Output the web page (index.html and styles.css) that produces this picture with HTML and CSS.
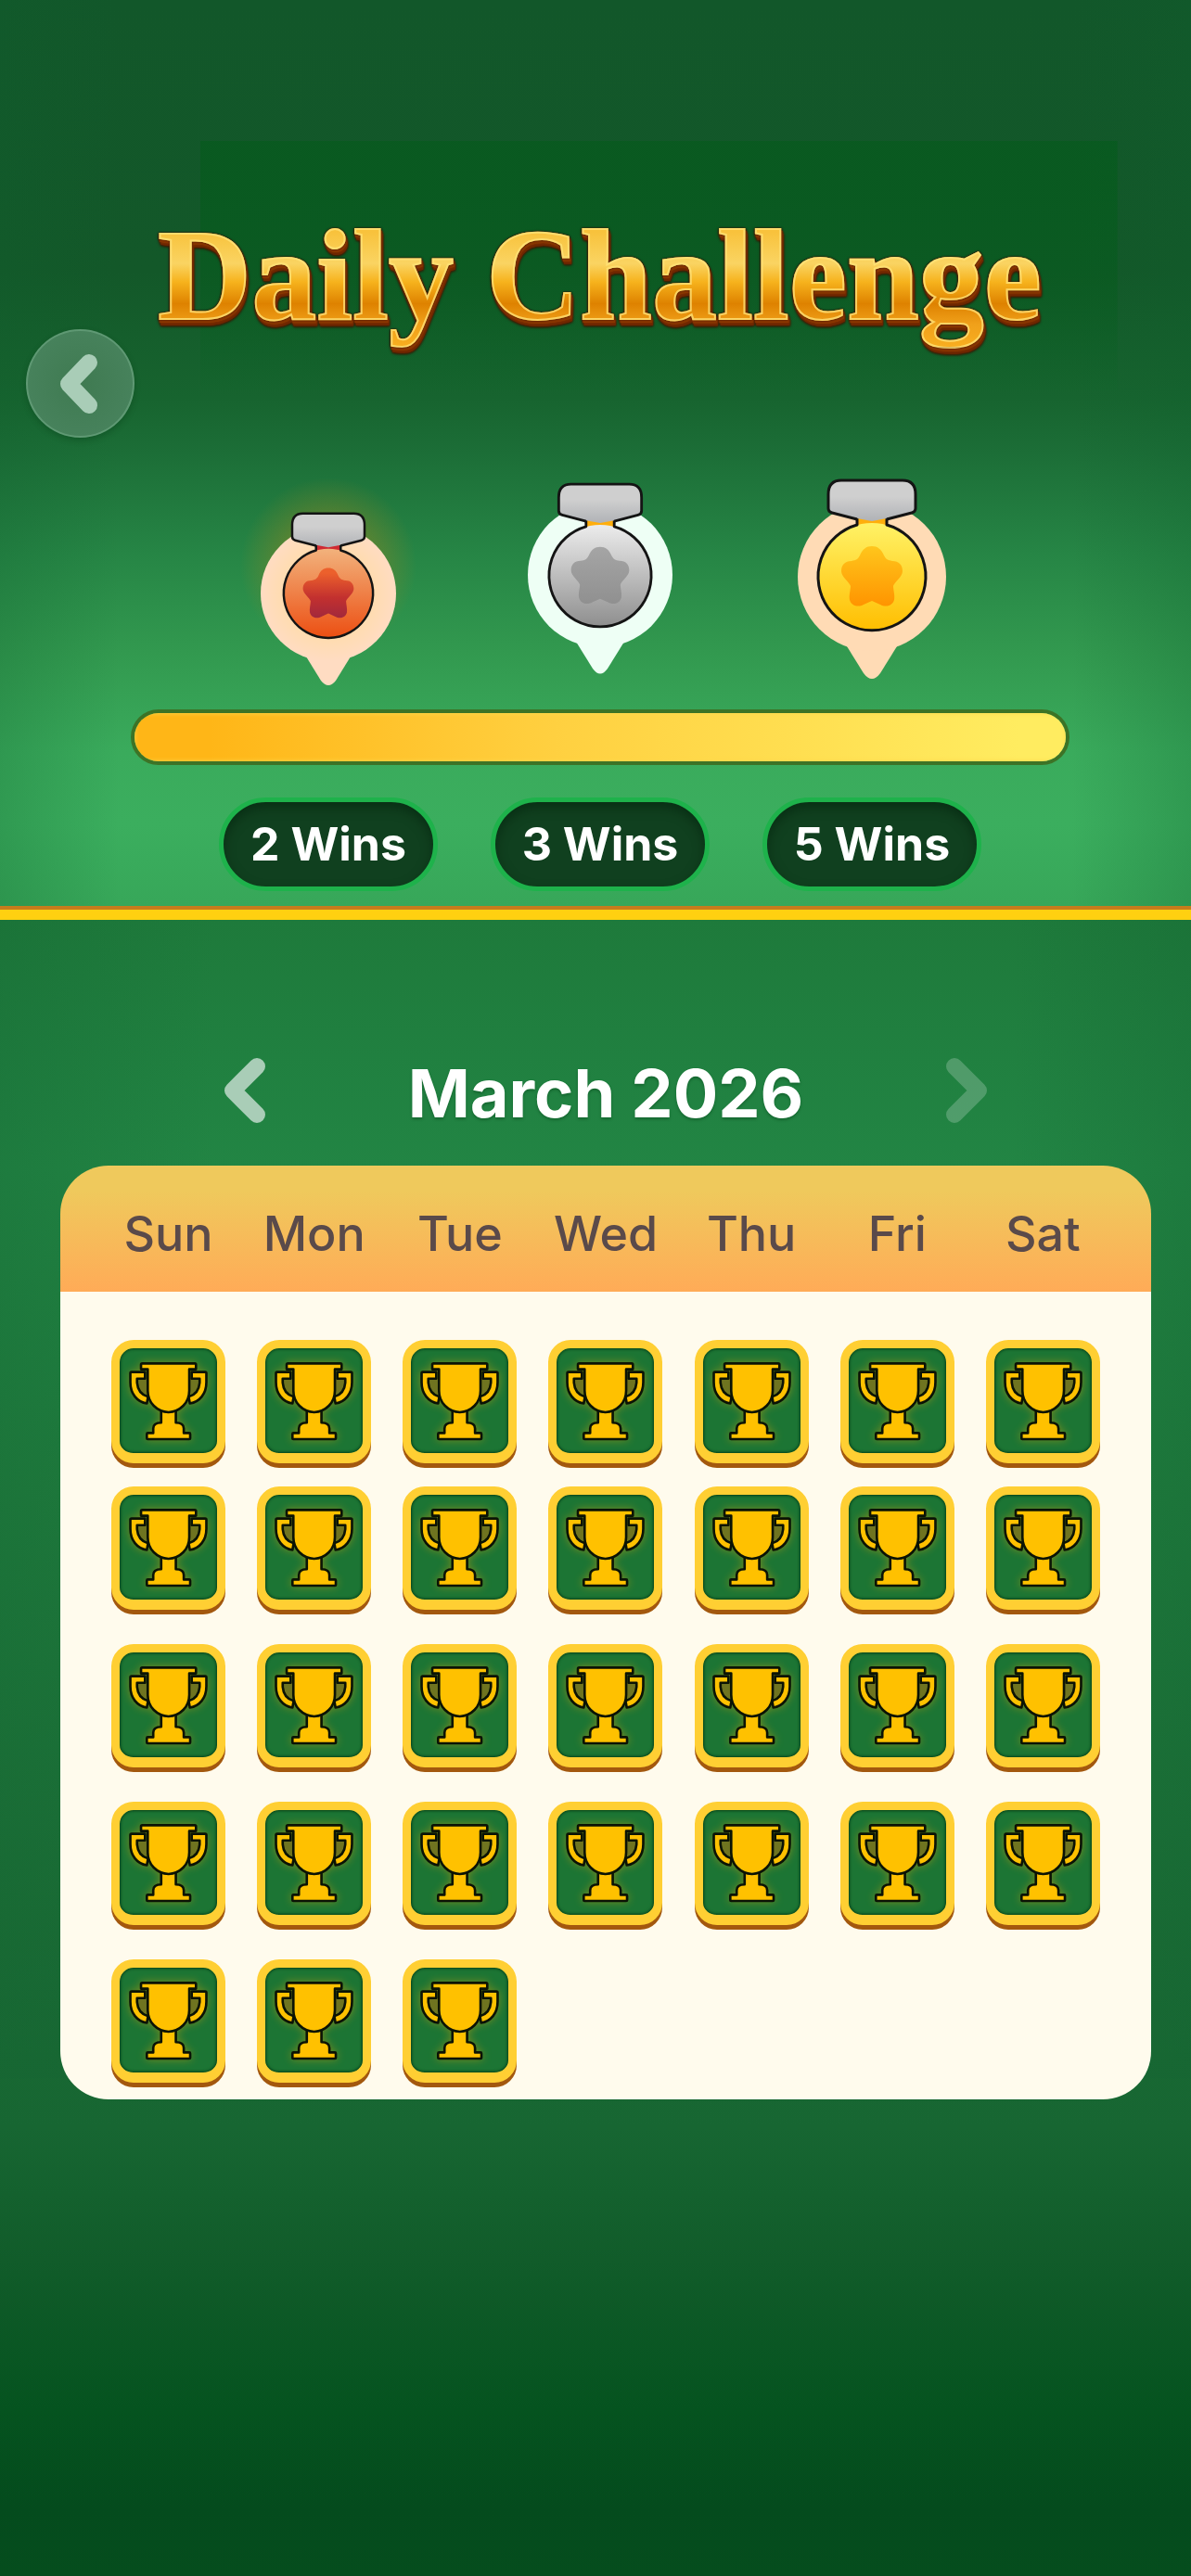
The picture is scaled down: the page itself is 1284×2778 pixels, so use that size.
FILE: index.html
```html
<!DOCTYPE html>
<html lang="en">
  <head>
    <meta charset="UTF-8" />
    <meta name="viewport" content="width=device-width, initial-scale=1.0" />
    <title>Daily Challenge</title>
    <link rel="stylesheet" href="styles.css">
  </head>
  <body>
    <!-- shared shapes -->
    <svg class="defs" width="0" height="0" aria-hidden="true">
      <defs>
        <linearGradient id="steel" x1="0" y1="0" x2="0" y2="1">
          <stop offset="0.4" stop-color="#cfcfcf" />
          <stop offset="1" stop-color="#b0b2b6" />
        </linearGradient>
        <linearGradient id="bronze" x1="0" y1="0" x2="0" y2="1">
          <stop offset="0" stop-color="#f2b27c" />
          <stop offset="1" stop-color="#ec4e12" />
        </linearGradient>
        <linearGradient id="bronze_star" x1="0" y1="0" x2="0" y2="1">
          <stop offset="0.1" stop-color="#ec602c" />
          <stop offset="0.6" stop-color="#c2302f" />
          <stop offset="1" stop-color="#a2283c" />
        </linearGradient>
        <linearGradient id="silver" x1="0" y1="0" x2="0" y2="1">
          <stop offset="0" stop-color="#ececec" />
          <stop offset="1" stop-color="#8e8e8e" />
        </linearGradient>
        <linearGradient id="silver_star" x1="0" y1="0" x2="0" y2="1">
          <stop offset="0" stop-color="#a5a5a5" />
          <stop offset="1" stop-color="#909090" />
        </linearGradient>
        <linearGradient id="gold" x1="0" y1="0" x2="0" y2="1">
          <stop offset="0" stop-color="#fff266" />
          <stop offset="1" stop-color="#ffbe00" />
        </linearGradient>
        <linearGradient id="gold_star" x1="0" y1="0" x2="0" y2="1">
          <stop offset="0" stop-color="#ffc61c" />
          <stop offset="1" stop-color="#ff9400" />
        </linearGradient>
        <radialGradient id="peach">
          <stop offset="0.6" stop-color="#ffdcac" />
          <stop offset="1" stop-color="#ffdcc2" />
        </radialGradient>
        <radialGradient id="shine">
          <stop offset="0.3" stop-color="#a0861c" stop-opacity="0.6" />
          <stop offset="1" stop-color="#a0861c" stop-opacity="0" />
        </radialGradient>

        <path id="star" d="M0 -33 C6 -33 10 -30 13 -23 C15 -19 17 -18 22 -17 C29 -17 33 -13 33 -6 C33 0 24 6 23 10 C23 14 25 20 24 25 C22 32 14 33 9 30 L0 26 L-9 30 C-14 33 -22 32 -24 25 C-25 20 -23 14 -23 10 C-24 6 -33 0 -33 -6 C-33 -13 -29 -17 -22 -17 C-17 -18 -15 -19 -13 -23 C-10 -30 -6 -33 0 -33 Z" />
        <path id="clip" d="M-33 -106 H33 Q47 -106 47 -92 V-77 Q47 -73 43 -72 L16 -65 L0 -62 L-16 -65 L-43 -72 Q-47 -73 -47 -77 V-92 Q-47 -106 -33 -106 Z" />

        <symbol id="trophy" viewBox="87 101 319 340">
          <path d="M143 196 H178 V250 C157 248 145 230 143 196 Z M350 196 H315 V250 C336 248 348 230 350 196 Z" fill="#6f7420" />
          <g fill="#ffc100" stroke="#0b1305" stroke-width="8" stroke-linejoin="round">
            <path d="M122 181 Q122 177 126 177 H170 V199 H144 V212 C146 237 158 252 180 258 L176 280 C144 276 122 248 122 211 Z" />
            <path d="M371 181 Q371 177 367 177 H323 V199 H349 V212 C347 237 335 252 313 258 L317 280 C349 276 371 248 371 211 Z" />
            <path d="M223 300 H271 V343 C287 343 297 350 297 362 V377 H315 Q318 377 318 380 V395 Q318 397 315 397 H179 Q176 397 176 395 V380 Q176 377 179 377 H197 V362 C197 350 207 343 223 343 Z" />
            <path d="M161 149 H333 Q337 149 337 153 V168 H315 V238 C315 278 285 307 247 309 C209 307 179 278 179 238 V168 H157 V153 Q157 149 161 149 Z" />
          </g>
        </symbol>
      </defs>
    </svg>

    <section class="hero">
      <header class="top">
        <button class="back" type="button" aria-label="Back">
          <svg viewBox="0 0 50 66" width="50" height="66"><path d="M34 10 L12 33 L34 56" /></svg>
        </button>
        <h1 class="title"><span>Daily Challenge</span></h1>
      </header>

      <div class="goals">
        <div class="medals">
          <svg viewBox="0 0 236 240" width="236" height="240">
            <circle cx="118" cy="100" r="95" fill="url(#shine)" />
            <path d="M94 198 H142 L126 224 Q118 234 110 224 Z" fill="#ffdcc2" />
            <circle cx="118" cy="130" r="73" fill="url(#peach)" />
            <g transform="translate(118 130) scale(0.83)">
              <path d="M-16 -70 H16 V-50 H-16 Z" fill="#d02a32" />
              <circle r="58" fill="url(#bronze)" />
              <path class="outline" d="M-16 -66 V-56 A58 58 0 1 0 16 -56 V-66" />
              <use href="#clip" y="2" fill="url(#steel)" />
              <path class="outline" d="M-16 -62 L-43 -69 Q-47 -70 -47 -74 V-89 Q-47 -104 -33 -104 H33 Q47 -104 47 -89 V-74 Q47 -70 43 -69 L16 -62" />
              <use href="#star" fill="url(#bronze_star)" />
            </g>
          </svg>
          <svg viewBox="0 0 236 240" width="236" height="240">
            <path d="M92 182 H144 L126 211 Q118 222 110 211 Z" fill="#eefff5" />
            <circle cx="118" cy="110" r="78" fill="#eefff5" />
            <g transform="translate(118 111) scale(0.95)">
              <path d="M-16 -70 H16 V-50 H-16 Z" fill="#ffae0c" />
              <circle r="58" fill="url(#silver)" />
              <path class="outline" d="M-16 -66 V-56 A58 58 0 1 0 16 -56 V-66" />
              <use href="#clip" y="2" fill="url(#steel)" />
              <path class="outline" d="M-16 -62 L-43 -69 Q-47 -70 -47 -74 V-89 Q-47 -104 -33 -104 H33 Q47 -104 47 -89 V-74 Q47 -70 43 -69 L16 -62" />
              <use href="#star" fill="url(#silver_star)" />
            </g>
          </svg>
          <svg viewBox="0 0 236 240" width="236" height="240">
            <path d="M91 187 H145 L127 216 Q118 228 109 216 Z" fill="#ffdbb5" />
            <circle cx="118" cy="112" r="80" fill="#ffdbb5" />
            <g transform="translate(118 112)">
              <path d="M-16 -70 H16 V-50 H-16 Z" fill="#ffae0c" />
              <circle r="58" fill="url(#gold)" />
              <path class="outline" d="M-16 -66 V-56 A58 58 0 1 0 16 -56 V-66" />
              <use href="#clip" y="2" fill="url(#steel)" />
              <path class="outline" d="M-16 -62 L-43 -69 Q-47 -70 -47 -74 V-89 Q-47 -104 -33 -104 H33 Q47 -104 47 -89 V-74 Q47 -70 43 -69 L16 -62" />
              <use href="#star" fill="url(#gold_star)" />
            </g>
          </svg>
        </div>
        <progress class="bar" value="5" max="5" aria-label="Wins"></progress>
        <ul class="wins">
          <li>2 Wins</li>
          <li>3 Wins</li>
          <li>5 Wins</li>
        </ul>
      </div>
    </section>

    <main class="calendar">
      <div class="month">
        <button class="prev" type="button" aria-label="Previous month">
          <svg viewBox="0 0 45 70" width="45" height="70"><path d="M36 9 L10 35 L36 61" /></svg>
        </button>
        <h2>March 2026</h2>
        <button class="next" type="button" aria-label="Next month" disabled>
          <svg viewBox="0 0 45 70" width="45" height="70"><path d="M9 9 L35 35 L9 61" /></svg>
        </button>
      </div>

      <div class="panel">
        <table class="days">
          <thead>
            <tr>
              <th>Sun</th>
              <th>Mon</th>
              <th>Tue</th>
              <th>Wed</th>
              <th>Thu</th>
              <th>Fri</th>
              <th>Sat</th>
            </tr>
          </thead>
          <tbody id="day_list"></tbody>
        </table>
      </div>
    </main>

    <script>
      // March 2026 starts on a Sunday
      let total_days = 31;
      let rows = "";
      for (let start = 1; start <= total_days; start += 7) {
        rows += "<tr>";
        for (let day = start; day < start + 7; day++) {
          if (day > total_days) {
            rows += "<td></td>";
          } else {
            rows += `
              <td>
                <button class="day" type="button" aria-label="March ${day}">
                  <svg><use href="#trophy"></use></svg>
                </button>
              </td>
            `;
          }
        }
        rows += "</tr>";
      }
      document.getElementById("day_list").innerHTML = rows;
    </script>
  </body>
</html>
```
FILE: styles.css
```css
* {
  box-sizing: border-box;
}
body {
  margin: 0;
  min-height: 100vh;
  font-family: Inter, "Liberation Sans", sans-serif;
  background-color: #054a1e;
}
.defs {
  position: absolute;
}
h1,
h2,
ul {
  margin: 0;
  padding: 0;
}
button {
  padding: 0;
  border: 0;
  background: none;
  cursor: pointer;
}
svg {
  display: block;
}

/* hero */
.hero {
  padding-bottom: 16px;
  background:
    linear-gradient(rgba(0, 92, 24, 0.5), rgba(0, 92, 24, 0.4) 40%, rgba(10, 108, 40, 0.1)) 73% 216px / 77% 205px no-repeat,
    linear-gradient(rgba(0, 92, 24, 0.5), rgba(0, 92, 24, 0.5)) 73% 152px / 77% 64px no-repeat,
    linear-gradient(90deg, rgba(15, 95, 45, 0.25), transparent 10%, transparent 90%, rgba(15, 95, 45, 0.25)),
    linear-gradient(#12572a, #135829 30%, #17642f 44%, #1c6e37 50%, #268545 61%, #32994f 72%, #3aab5c 83%, #3bae5e 91%, #37a759);
  border-bottom: 4px solid #c67c1c;
}
.top {
  display: flex;
  align-items: flex-end;
  padding: 217px 136px 0 28px;
}
.back {
  flex: none;
  display: flex;
  align-items: center;
  justify-content: center;
  width: 117px;
  height: 117px;
  border: 2px solid rgba(120, 175, 140, 0.5);
  border-radius: 50%;
  background: radial-gradient(#3f7a51, #4a8560);
  box-shadow: 0 3px 6px rgba(0, 50, 15, 0.3);
}
.back svg,
.month svg {
  fill: none;
  stroke: #a9cdb7;
  stroke-width: 18px;
  stroke-linecap: round;
  stroke-linejoin: round;
}
.title {
  flex-grow: 1;
  margin-bottom: 95px;
  font: bold 140px/160px "Liberation Serif", serif;
  text-align: center;
  white-space: nowrap;
  filter: drop-shadow(0 0 1px #3c1200) drop-shadow(1px 3px 0 #8a3600) drop-shadow(1px 3px 0 #6e2600) drop-shadow(0 1px 1px #2c1000);
}
.title span {
  color: transparent;
  background: linear-gradient(#f8c23c 20%, #fad462 42%, #f6b21c 55%, #de8200 70%, #f0a01a 84%, #f8ae20);
  background-clip: text;
  -webkit-background-clip: text;
  -webkit-text-stroke: 2px rgba(255, 226, 120, 0.8);
}

.goals {
  padding: 38px 131px 0 141px;
}
.medals,
.wins {
  display: grid;
  grid-template-columns: repeat(3, 236px);
  justify-content: center;
  gap: 57px;
}
.outline {
  fill: none;
  stroke: #141414;
  stroke-width: 3px;
  stroke-linejoin: round;
}
.bar {
  appearance: none;
  display: block;
  width: 100%;
  height: 60px;
  margin: 15px 0 35px;
  border: 4px solid #3d7326;
  border-radius: 30px;
  overflow: hidden;
}
.bar::-webkit-progress-bar {
  background: #10401f;
}
.bar::-webkit-progress-value {
  background: linear-gradient(90deg, #ffb617 8%, #ffd040 45%, #ffec60 95%);
  box-shadow: inset 0 0 5px #ffd84e;
}
.wins {
  list-style: none;
}
.wins li {
  border: 5px solid #1eb24b;
  border-radius: 51px;
  background-color: #10401f;
  box-shadow: inset 0 6px 12px rgba(0, 30, 10, 0.5);
  color: #fff;
  font-size: 50px;
  font-weight: 700;
  line-height: 91px;
  text-align: center;
}

/* calendar */
.calendar {
  padding: 149px 43px 513px 65px;
  border-top: 11px solid #ffd010;
  background:
    linear-gradient(90deg, rgba(20, 100, 50, 0.3), transparent 18%, transparent 85%, rgba(20, 100, 50, 0.3)) 0 0 / 100% 70% no-repeat,
    linear-gradient(#1e7a3b, #228544 15%, #1f7b3d 35%, #1a6c35 60%, #176632 73%, #115c2a 81%, #05531f 90%, #044b1d 96%, #054d1d);
}
.month {
  display: flex;
  align-items: center;
  justify-content: space-between;
  height: 70px;
  margin-bottom: 46px;
  padding: 0 176px;
}
.month .next {
  opacity: 0.35;
}
h2 {
  padding-top: 6px;
  color: #fff;
  font-size: 72px;
  font-weight: 700;
  line-height: 78px;
  text-shadow: 0 2px 3px rgba(0, 60, 20, 0.4);
}
.panel {
  padding: 0 38px;
  border-radius: 52px;
  background: linear-gradient(#efc95c 20%, #ffab57) 0 0 / 100% 136px no-repeat #fffbed;
}
.days {
  width: 100%;
  table-layout: fixed;
  border-collapse: collapse;
}
.days th {
  height: 136px;
  padding: 10px 0 0;
  color: #5a4a4a;
  font-size: 52px;
  font-weight: 500;
}
.days td {
  padding: 0 0 32px;
}
.days tr:first-child td {
  padding: 52px 0 20px;
}
.days tr:last-child td {
  padding-bottom: 13px;
}
.day {
  display: block;
  width: 123px;
  height: 133px;
  margin: 0 auto 5px;
  border: 9px solid #ffcf33;
  border-bottom-width: 11px;
  border-radius: 24px;
  background-color: #1c7534;
  box-shadow: 0 5px #a3580e, inset 0 0 3px 1px #063f17;
}
.day svg {
  width: 105px;
  height: 113px;
  filter: drop-shadow(0 0 5px rgba(255, 170, 0, 0.4));
}
```
